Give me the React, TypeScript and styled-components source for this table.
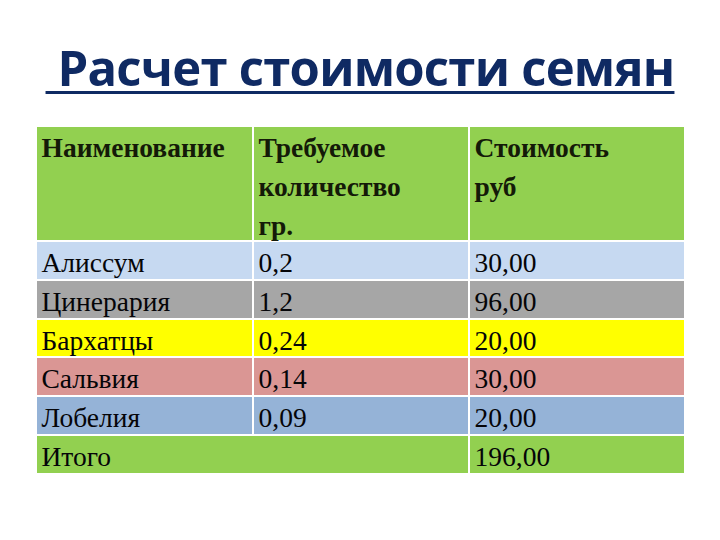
import React from 'react'
import styled, { createGlobalStyle } from 'styled-components'

const GlobalStyle = createGlobalStyle`
html, body {
    margin: 0;
    padding: 0;
    background: #ffffff;
}
`

const Page = styled.div`
width: 720px;
height: 540px;
display: flex;
flex-flow: column nowrap;
align-items: center;
padding-top: 43px;
box-sizing: border-box;
`

const Title = styled.h1`
margin: 0 0 35px 0;
font-family: "Open Sans", "Noto Sans", sans-serif;
font-weight: 700;
font-size: 49px;
line-height: 49px;
letter-spacing: -0.75px;
color: #0f2a63;
white-space: pre;
text-decoration: underline;
text-decoration-thickness: 3px;
text-underline-offset: 5px;
`

const Grid = styled.div`
width: 647px;
display: grid;
grid-template-columns: 215px 214px 214px;
grid-template-rows: 113px repeat(6, 36.8px);
column-gap: 2px;
row-gap: 2px;
`

type Tone = 'green' | 'sky' | 'grey' | 'yellow' | 'rose' | 'blue'

const tones: Record<Tone, string> = {
    green : '#92d050',
    sky   : '#c6d9f1',
    grey  : '#a6a6a6',
    yellow: '#ffff00',
    rose  : '#da9694',
    blue  : '#95b3d7',
}

const HeadCell = styled.div`
background: ${tones.green};
padding: 1px 5px 0 5px;
font-family: "Liberation Serif", "Times New Roman", serif;
font-weight: 700;
font-size: 27.5px;
line-height: 39px;
color: #141a08;
overflow: visible;
white-space: nowrap;
`

const Cell = styled.div<{ $tone: Tone; $span?: number }>`
background: ${p => tones[p.$tone]};
grid-column: span ${p => p.$span ?? 1};
padding: 4px 5px 0 5px;
font-family: "Liberation Serif", "Times New Roman", serif;
font-size: 27.5px;
line-height: 33px;
color: #050508;
white-space: nowrap;
`

interface Semence {
    nom     :string;
    qte     :string;
    prix    :string;
    tone    :Tone;
}

const rows :Semence[] = [
    { nom: 'Алиссум',   qte: '0,2',  prix: '30,00', tone: 'sky' },
    { nom: 'Цинерария', qte: '1,2',  prix: '96,00', tone: 'grey' },
    { nom: 'Бархатцы',  qte: '0,24', prix: '20,00', tone: 'yellow' },
    { nom: 'Сальвия',   qte: '0,14', prix: '30,00', tone: 'rose' },
    { nom: 'Лобелия',   qte: '0,09', prix: '20,00', tone: 'blue' },
]

const App = () => {
    return (
        <>
            <GlobalStyle />
            <Page>
                <Title>{'\u00a0Расчет стоимости семян'}</Title>
                <Grid>
                    <HeadCell>Наименование</HeadCell>
                    <HeadCell>Требуемое<br />количество<br />гр.</HeadCell>
                    <HeadCell>Стоимость<br />руб</HeadCell>
                    {rows.map(r => (
                        <React.Fragment key={r.nom}>
                            <Cell $tone={r.tone}>{r.nom}</Cell>
                            <Cell $tone={r.tone}>{r.qte}</Cell>
                            <Cell $tone={r.tone}>{r.prix}</Cell>
                        </React.Fragment>
                    ))}
                    <Cell $tone="green" $span={2}>Итого</Cell>
                    <Cell $tone="green">196,00</Cell>
                </Grid>
            </Page>
        </>
    )
}

export default App
